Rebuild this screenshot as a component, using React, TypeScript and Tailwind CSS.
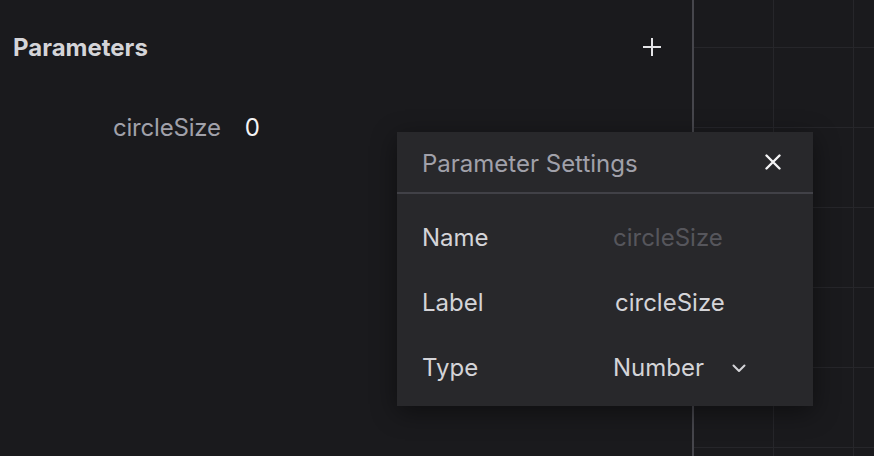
const FONT = { fontFamily: "Inter, 'Noto Sans', sans-serif" };

function CanvasGrid() {
  return (
    <svg className="w-full h-full block" aria-hidden>
      <defs>
        <pattern id="grid" width="80" height="80" patternUnits="userSpaceOnUse" x="79" y="47">
          <path d="M0 0.5H80M0.5 0V80" stroke="#26262a" strokeWidth="1" fill="none" />
        </pattern>
      </defs>
      <rect width="100%" height="100%" fill="url(#grid)" />
    </svg>
  );
}

function PlusIcon() {
  return (
    <svg width="20" height="20" viewBox="0 0 20 20" className="text-[#e4e4e7]">
      <path d="M10 1V19M1 10H19" stroke="currentColor" strokeWidth="2" />
    </svg>
  );
}

function CloseIcon() {
  return (
    <svg width="16" height="16" viewBox="0 0 16 16" className="text-[#f4f4f5]">
      <path d="M1.5 1.5L14.5 14.5M14.5 1.5L1.5 14.5" stroke="currentColor" strokeWidth="2.4" strokeLinecap="round" />
    </svg>
  );
}

function Chevron() {
  return (
    <svg width="14" height="9" viewBox="0 0 14 9" className="text-[#d4d4d8]">
      <path d="M1.5 1.5L7 7L12.5 1.5" stroke="currentColor" strokeWidth="2" fill="none" strokeLinecap="round" strokeLinejoin="round" />
    </svg>
  );
}

const rows = [
  { label: "Name", value: "circleSize", cls: "text-[#56565c]" },
  { label: "Label", value: "circleSize", cls: "text-[#d4d4d8] pl-[2px]" },
];

export default function App() {
  return (
    <div className="relative w-[874px] h-[456px] bg-[#1a1a1d] flex overflow-hidden" style={FONT}>
      {/* Parameters panel */}
      <div className="w-[694px] h-full border-r-2 border-[#46464c] shrink-0">
        <div className="h-[94px] flex items-center justify-between pl-[13px] pr-[30px]">
          <h2 className="text-[24px] font-bold text-[#d4d4d8] pt-[2px]">Parameters</h2>
          <PlusIcon />
        </div>
        <div className="h-[66px] flex items-center pl-[113px] gap-[24px] pt-[2px]">
          <span className="text-[24px] text-[#a1a1aa] tracking-[-0.2px]">circleSize</span>
          <span className="text-[24px] text-[#f4f4f5]">0</span>
        </div>
      </div>

      {/* Canvas */}
      <div className="flex-1 h-full">
        <CanvasGrid />
      </div>

      {/* Parameter settings popover */}
      <div className="absolute left-[397px] top-[132px] w-[416px] h-[274px] bg-[#28282b] shadow-[0_6px_24px_rgba(0,0,0,0.45)]">
        <div className="h-[62px] flex items-center justify-between pl-[25px] pr-[32px] border-b-2 border-[#414147]">
          <span className="text-[24px] text-[#a1a1aa] pt-[3px]">Parameter Settings</span>
          <CloseIcon />
        </div>
        <div className="pt-[11px] pb-[5px]">
          {rows.map((r) => (
            <div key={r.label} className="h-[65px] flex items-center pl-[25px]">
              <span className="w-[191px] text-[24px] text-[#d4d4d8]">{r.label}</span>
              <span className={`text-[24px] ${r.cls}`}>{r.value}</span>
            </div>
          ))}
          <div className="h-[65px] flex items-center pl-[25px]">
            <span className="w-[191px] text-[24px] text-[#d4d4d8]">Type</span>
            <span className="text-[24px] text-[#d4d4d8]">Number</span>
            <span className="ml-[28px] pt-[2px]">
              <Chevron />
            </span>
          </div>
        </div>
      </div>
    </div>
  );
}
